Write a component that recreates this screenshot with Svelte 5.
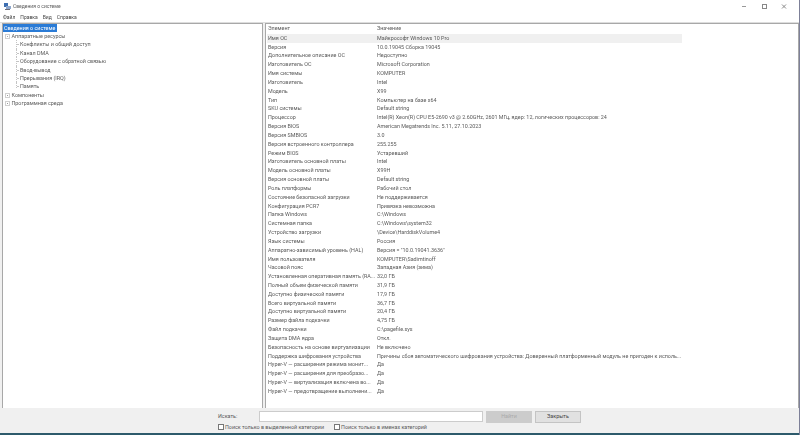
<script>
  const rows = [
    ["Имя ОС", "Майкрософт Windows 10 Pro"],
    ["Версия", "10.0.19045 Сборка 19045"],
    ["Дополнительное описание ОС", "Недоступно"],
    ["Изготовитель ОС", "Microsoft Corporation"],
    ["Имя системы", "KOMPUTER"],
    ["Изготовитель", "Intel"],
    ["Модель", "X99"],
    ["Тип", "Компьютер на базе x64"],
    ["SKU системы", "Default string"],
    ["Процессор", "Intel(R) Xeon(R) CPU E5-2690 v3 @ 2.60GHz, 2601 МГц, ядер: 12, логических процессоров: 24"],
    ["Версия BIOS", "American Megatrends Inc. 5.11, 27.10.2023"],
    ["Версия SMBIOS", "3.0"],
    ["Версия встроенного контроллера", "255.255"],
    ["Режим BIOS", "Устаревший"],
    ["Изготовитель основной платы", "Intel"],
    ["Модель основной платы", "X99H"],
    ["Версия основной платы", "Default string"],
    ["Роль платформы", "Рабочий стол"],
    ["Состояние безопасной загрузки", "Не поддерживается"],
    ["Конфигурация PCR7", "Привязка невозможна"],
    ["Папка Windows", "C:\\Windows"],
    ["Системная папка", "C:\\Windows\\system32"],
    ["Устройство загрузки", "\\Device\\HarddiskVolume4"],
    ["Язык системы", "Россия"],
    ["Аппаратно-зависимый уровень (HAL)", "Версия = \"10.0.19041.3636\""],
    ["Имя пользователя", "KOMPUTER\\Sadimtinoff"],
    ["Часовой пояс", "Западная Азия (зима)"],
    ["Установленная оперативная память (RA...", "32,0 ГБ"],
    ["Полный объем физической памяти", "31,9 ГБ"],
    ["Доступно физической памяти", "17,9 ГБ"],
    ["Всего виртуальной памяти", "36,7 ГБ"],
    ["Доступно виртуальной памяти", "20,4 ГБ"],
    ["Размер файла подкачки", "4,75 ГБ"],
    ["Файл подкачки", "C:\\pagefile.sys"],
    ["Защита DMA ядра", "Откл."],
    ["Безопасность на основе виртуализации", "Не включено"],
    ["Поддержка шифрования устройства", "Причины сбоя автоматического шифрования устройства: Доверенный платформенный модуль не пригоден к исполь..."],
    ["Hyper-V — расширения режима монит...", "Да"],
    ["Hyper-V — расширения для преобразо...", "Да"],
    ["Hyper-V — виртуализация включена во...", "Да"],
    ["Hyper-V — предотвращение выполнени...", "Да"],
  ];
  const resources = [
    "Конфликты и общий доступ",
    "Канал DMA",
    "Оборудование с обратной связью",
    "Ввод-вывод",
    "Прерывания (IRQ)",
    "Память",
  ];
</script>

<div class="window">
  <header class="title">
    <svg class="appicon" width="7" height="7" viewBox="0 0 7 7">
      <rect x="0" y="0" width="4" height="4" fill="#3c6db0" />
      <rect x="2" y="3" width="5" height="3" fill="#8fa8cc" />
      <rect x="1" y="6" width="5" height="1" fill="#6b6b78" />
    </svg>
    <span>Сведения о системе</span>
    <div class="controls">
      <svg width="46" height="10" viewBox="0 0 46 10">
        <path d="M0 5.5h4" stroke="#999" fill="none" />
        <rect x="20.5" y="3.5" width="4" height="4" stroke="#888" fill="none" />
        <path d="M40 3.5l4 4M44 3.5l-4 4" stroke="#888" fill="none" />
      </svg>
    </div>
  </header>

  <nav class="menu">
    <span>Файл</span><span>Правка</span><span>Вид</span><span>Справка</span>
  </nav>

  <main class="panes">
    <section class="tree">
      <div class="selected">Сведения о системе</div>
      <div class="node"><i class="box"></i>Аппаратные ресурсы</div>
      {#each resources as item, i}
        <div class="leaf" class:last={i === resources.length - 1}>{item}</div>
      {/each}
      <div class="node"><i class="box plus"></i>Компоненты</div>
      <div class="node"><i class="box plus"></i>Программная среда</div>
    </section>

    <section class="list">
      <div class="row head"><span class="k">Элемент</span><span>Значение</span></div>
      {#each rows as r, i}
        <div class="row" class:hl={i === 0}><span class="k">{r[0]}</span><span class="v">{r[1]}</span></div>
      {/each}
    </section>
  </main>

  <footer class="search">
    <div class="line">
      <label for="q">Искать:</label>
      <input id="q" type="text" />
      <button class="off">Найти</button>
      <button>Закрыть</button>
    </div>
    <div class="checks">
      <span class="check"><i></i>Поиск только в выделенной категории</span>
      <span class="check"><i></i>Поиск только в именах категорий</span>
    </div>
  </footer>
  <div class="taskbar"></div>
</div>

<style>
  :global(body) {
    margin: 0;
    background: #fff;
  }

  .window {
    width: 800px;
    height: 435px;
    display: flex;
    flex-direction: column;
    box-sizing: border-box;
    border-right: 1px solid #7d8098;
    font-family: Roboto, "Liberation Sans", sans-serif;
    font-size: 5.4px;
    line-height: 8.8px;
    color: #5a5a5a;
    overflow: hidden;
    filter: blur(0.35px);
  }

  .title {
    height: 12px;
    display: flex;
    align-items: center;
    padding-left: 4px;
    flex: none;
    font-size: 5px;
  }

  .appicon {
    margin-right: 2px;
  }

  .controls {
    margin-left: auto;
    margin-right: 11px;
    display: flex;
  }

  .menu {
    height: 10px;
    display: flex;
    gap: 5px;
    align-items: center;
    padding-left: 3px;
    flex: none;
    color: #444;
    font-size: 5px;
  }

  .panes {
    flex: 1;
    min-height: 0;
    display: flex;
    gap: 2px;
    padding-left: 2px;
    background: #f0f0f0;
    border-top: 1px solid #ddd;
  }

  .tree {
    width: 261px;
    background: #fff;
    border: 1px solid #a8a8a8;
    border-width: 1px 1px 0 1px;
    box-sizing: border-box;
  }

  .selected {
    width: fit-content;
    background: #2a7bd6;
    color: #fff;
    padding: 0 2px 0 1px;
    height: 8px;
    line-height: 8px;
  }

  .node {
    padding-left: 8.5px;
    position: relative;
    height: 8.4px;
    line-height: 8.4px;
  }

  .box {
    position: absolute;
    left: 2px;
    top: 2px;
    width: 3px;
    height: 3px;
    border: 1px solid #d0d0d0;
    background: linear-gradient(#aaa, #aaa) center / 1px 1px no-repeat;
  }

  .box.plus {
    background: linear-gradient(#999, #999) center / 1px 1px no-repeat;
  }

  .leaf {
    padding-left: 17px;
    position: relative;
    height: 8.4px;
    line-height: 8.4px;
  }

  .leaf::before {
    content: "";
    position: absolute;
    left: 13px;
    top: 0;
    bottom: 0;
    width: 2px;
    border-left: 1px dotted #c4c4c4;
    background: linear-gradient(#c4c4c4, #c4c4c4) 0 4px / 2px 1px no-repeat;
  }

  .leaf.last::before {
    bottom: 3px;
  }

  .list {
    flex: 1;
    min-width: 0;
    background: #fff;
    border: 1px solid #a8a8a8;
    border-width: 1px 1px 0 1px;
    padding-left: 1px;
    overflow: hidden;
  }

  .row {
    display: flex;
    width: 414px;
    height: 8.83px;
    line-height: 8.83px;
    white-space: nowrap;
    padding-left: 1px;
  }

  .head {
    height: 9.8px;
  }

  .hl {
    background: #f0f0f0;
  }

  .k {
    width: 109px;
    flex: none;
  }

  .search {
    height: 25px;
    background: #f0f0f0;
    flex: none;
    padding-left: 218px;
    box-sizing: border-box;
  }

  .line {
    display: flex;
    align-items: center;
    height: 15px;
    padding-top: 2px;
    box-sizing: border-box;
  }

  label {
    width: 41px;
    flex: none;
  }

  input {
    width: 224px;
    height: 11px;
    box-sizing: border-box;
    border: 1px solid #ccc;
    background: #fff;
    padding: 0;
    margin-right: 3px;
  }

  button {
    width: 46px;
    height: 12px;
    border: 1px solid #c4c4c4;
    background: #e1e1e1;
    font: inherit;
    color: #444;
    padding: 0;
    margin-right: 3px;
  }

  button.off {
    background: #ccc;
    border-color: #ccc;
    color: #aaa;
  }

  .checks {
    display: flex;
    gap: 10px;
    height: 9px;
    align-items: center;
  }

  .check {
    display: flex;
    align-items: center;
    gap: 1px;
  }

  .check i {
    width: 4px;
    height: 4px;
    border: 1px solid #777;
    background: #fff;
  }

  .taskbar {
    height: 2px;
    background: #2d5a6b;
    flex: none;
    margin-right: -1px;
  }
</style>
